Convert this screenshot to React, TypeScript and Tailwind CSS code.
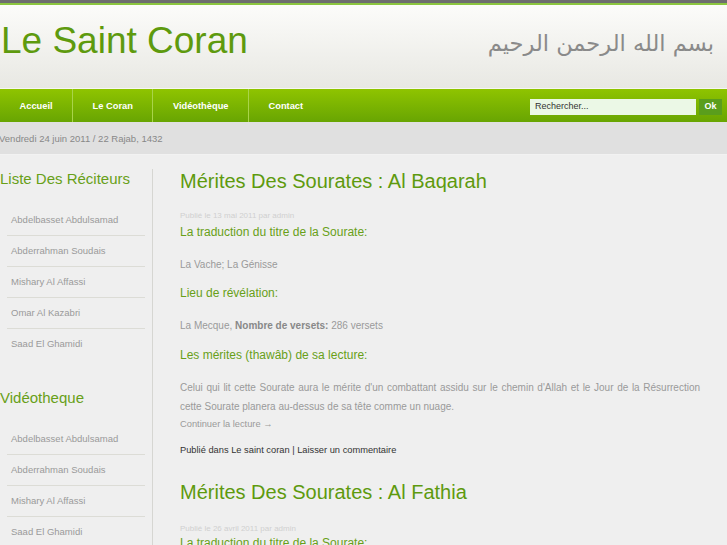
import React from 'react';

const reciters = [
  'Abdelbasset Abdulsamad',
  'Abderrahman Soudais',
  'Mishary Al Affassi',
  'Omar Al Kazabri',
  'Saad El Ghamidi',
];

const videos = [
  'Abdelbasset Abdulsamad',
  'Abderrahman Soudais',
  'Mishary Al Affassi',
  'Saad El Ghamidi',
];

const navItems = ['Accueil', 'Le Coran', 'Vidéothèque', 'Contact'];

function SideList({ items }: { items: string[] }) {
  return (
    <ul className="mx-[7px] mt-[17px]">
      {items.map((item, idx) => (
        <li
          key={idx}
          className={`h-[31px] flex items-center pl-[4px] text-[9.5px] text-[#9a9a9a] ${
            idx < items.length - 1 ? 'border-b border-[#dcdcd6]' : ''
          }`}
        >
          {item}
        </li>
      ))}
    </ul>
  );
}

export default function App() {
  return (
    <div className="w-[727px] h-[545px] overflow-hidden bg-[#efefef] font-['Liberation_Sans',Arial,sans-serif]">
      {/* Top strips */}
      <div className="h-[3px] bg-[#6e6e6e]" />
      <div className="h-[2px] bg-[#8cc63f]" />

      {/* Header */}
      <header className="h-[84px] flex items-center justify-between bg-gradient-to-b from-[#fcfcfa] to-[#e8e8e3] border-b border-[#f6f6f3]">
        <h1 className="ml-[1px] text-[37px] leading-none text-[#5e9a0e] -mt-[12px]">Le Saint Coran</h1>
        <div
          dir="rtl"
          className="mr-[13px] -mt-[6px] text-[22.5px] leading-none text-[#8a8a8a] font-['DejaVu_Sans',sans-serif]"
        >
          بسم الله الرحمن الرحيم
        </div>
      </header>

      {/* Navigation */}
      <nav className="h-[33px] flex items-center justify-between bg-gradient-to-b from-[#8fc400] to-[#68a502]">
        <ul className="flex h-full">
          {navItems.map((item, idx) => (
            <li
              key={idx}
              className={`h-full flex items-center pt-[2px] px-[19.5px] text-[9.3px] font-bold text-white ${
                idx < navItems.length - 1 ? 'border-r border-[#a9d44a]' : ''
              }`}
            >
              {item}
            </li>
          ))}
        </ul>
        <div className="flex items-center mr-[5px] pt-[2px]">
          <div className="w-[166px] h-[16px] bg-[#ebf8e6] flex items-center pl-[5px] text-[9px] text-[#333]">
            Rechercher...
          </div>
          <div className="ml-[3px] w-[23px] h-[16px] bg-[#5a9e1c] flex items-center justify-center text-[9px] font-bold text-white">
            Ok
          </div>
        </div>
      </nav>

      {/* Date bar */}
      <div className="h-[33px] bg-[#e0e0e0] border-b border-[#f2f2f2] flex items-center pt-[3px] text-[9.5px] text-[#888] -ml-[1px]">
        Vendredi 24 juin 2011 / 22 Rajab, 1432
      </div>

      {/* Content */}
      <div className="flex pt-[14px]">
        <aside className="w-[153px] shrink-0 border-r border-[#d6d6d2] h-[400px]">
          <h2 className="mt-[1px] text-[15px] leading-[18px] text-[#68a018]">Liste Des Réciteurs</h2>
          <SideList items={reciters} />
          <h2 className="mt-[29px] text-[15px] leading-[18px] text-[#68a018]">Vidéotheque</h2>
          <SideList items={videos} />
        </aside>

        <main className="ml-[27px] w-[520px]">
          <h2 className="text-[20px] leading-[24px] text-[#5e9a0e]">Mérites Des Sourates : Al Baqarah</h2>
          <p className="mt-[18px] text-[8px] leading-[10px] text-[#cfcfcf]">Publié le 13 mai 2011 par admin</p>
          <h3 className="mt-[3px] text-[12px] leading-[16px] text-[#68a018]">La traduction du titre de la Sourate:</h3>
          <p className="mt-[18px] text-[10px] leading-[14px] text-[#9a9a9a]">La Vache; La Génisse</p>
          <h3 className="mt-[13px] text-[12px] leading-[16px] text-[#68a018]">Lieu de révélation:</h3>
          <p className="mt-[18px] text-[10px] leading-[14px] text-[#9a9a9a]">
            La Mecque, <span className="font-bold text-[#888]">Nombre de versets:</span> 286 versets
          </p>
          <h3 className="mt-[14px] text-[12px] leading-[16px] text-[#68a018]">Les mérites (thawâb) de sa lecture:</h3>
          <p className="mt-[15px] text-[10px] leading-[19px] text-[#9a9a9a] text-justify">
            Celui qui lit cette Sourate aura le mérite d'un combattant assidu sur le chemin d'Allah et le Jour de la
            Résurrection cette Sourate planera au-dessus de sa tête comme un nuage.
          </p>
          <p className="mt-[2px] text-[9.3px] leading-[12px] text-[#9a9a9a]">Continuer la lecture →</p>
          <p className="mt-[14px] text-[9.3px] leading-[12px] text-[#333]">
            Publié dans Le saint coran | Laisser un commentaire
          </p>

          <h2 className="mt-[24px] text-[20px] leading-[24px] text-[#5e9a0e]">Mérites Des Sourates : Al Fathia</h2>
          <p className="mt-[20px] text-[8px] leading-[10px] text-[#cfcfcf]">Publié le 26 avril 2011 par admin</p>
          <h3 className="mt-[1px] text-[12px] leading-[16px] text-[#68a018]">La traduction du titre de la Sourate:</h3>
        </main>
      </div>
    </div>
  );
}
